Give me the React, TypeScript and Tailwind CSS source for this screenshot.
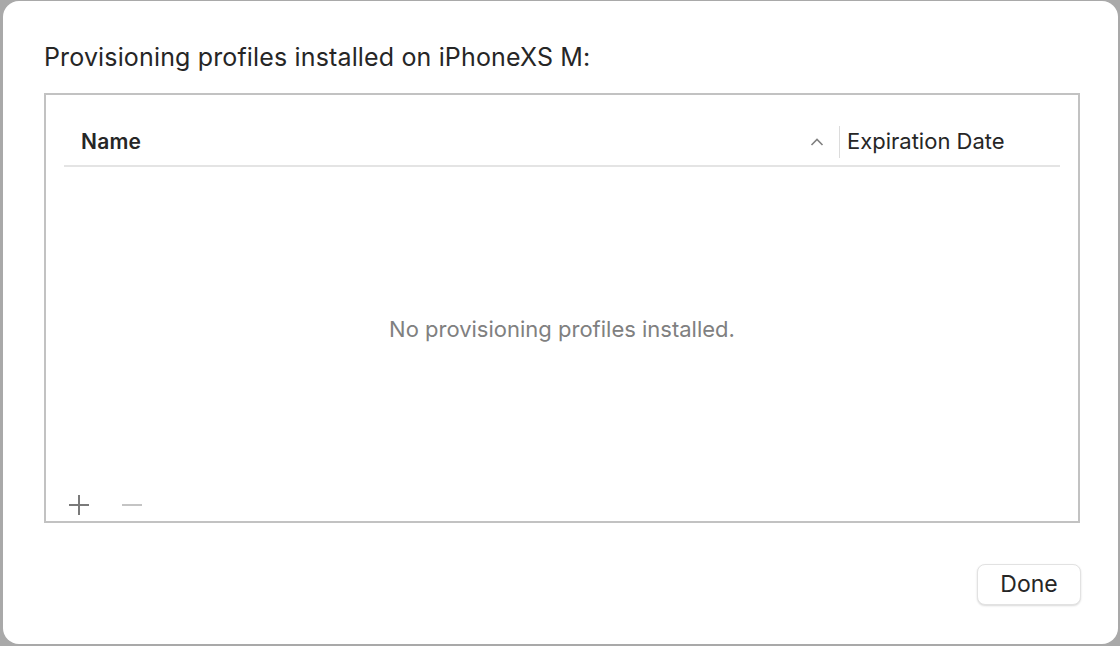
export default function App() {
  return (
    <div
      className="w-[1120px] h-[646px] bg-[#a9a9a9] overflow-hidden"
      style={{ fontFamily: 'Inter, "Noto Sans", "Liberation Sans", sans-serif' }}
    >
      <div className="ml-[3px] mt-[1px] w-[1115px] h-[643px] rounded-[16px] bg-white flex flex-col pl-[41px] pr-[38px]">
        <h1 className="mt-[41px] text-[25px] leading-[30px] text-[#262626] tracking-[0.15px]">
          Provisioning profiles installed on iPhoneXS M:
        </h1>

        <div className="mt-[21px] h-[430px] border-2 border-[#c2c2c2] flex flex-col px-[18px]">
          <div className="h-[72px] flex items-end border-b-2 border-[#e4e4e4]">
            <div className="h-[47px] flex items-center w-full">
              <div className="flex-1 pl-[17px] text-[21px] font-semibold text-[#262626] tracking-[0.2px]">Name</div>
              <svg width="14" height="10" viewBox="0 0 14 10" className="mr-[15px]">
                <path d="M1.5 8 L7 2.5 L12.5 8" fill="none" stroke="#808080" strokeWidth="1.6" />
              </svg>
              <div className="w-px h-[32px] bg-[#dcdcdc]" />
              <div className="w-[220px] pl-[7px] text-[22px] text-[#262626]">Expiration Date</div>
            </div>
          </div>

          <div className="flex-1 flex items-center justify-center pt-[16px]">
            <span className="text-[22px] text-[#808080]">No provisioning profiles installed.</span>
          </div>

          <div className="h-[46px] flex items-start gap-[31px] pl-[4px] pt-[19px]">
            <svg width="22" height="22" viewBox="0 0 22 22">
              <path d="M11 1 V21 M1 11 H21" stroke="#7a7a7a" strokeWidth="2" />
            </svg>
            <svg width="22" height="22" viewBox="0 0 22 22">
              <path d="M1 11 H21" stroke="#c4c4c4" strokeWidth="2" />
            </svg>
          </div>
        </div>

        <div className="flex justify-end mt-[41px] mr-[-1px]">
          <button className="w-[104px] h-[41px] rounded-[8px] bg-white border border-[#e2e2e2] shadow-[0_1px_2px_rgba(0,0,0,0.15)] text-[23px] text-[#262626]">
            Done
          </button>
        </div>
      </div>
    </div>
  )
}
